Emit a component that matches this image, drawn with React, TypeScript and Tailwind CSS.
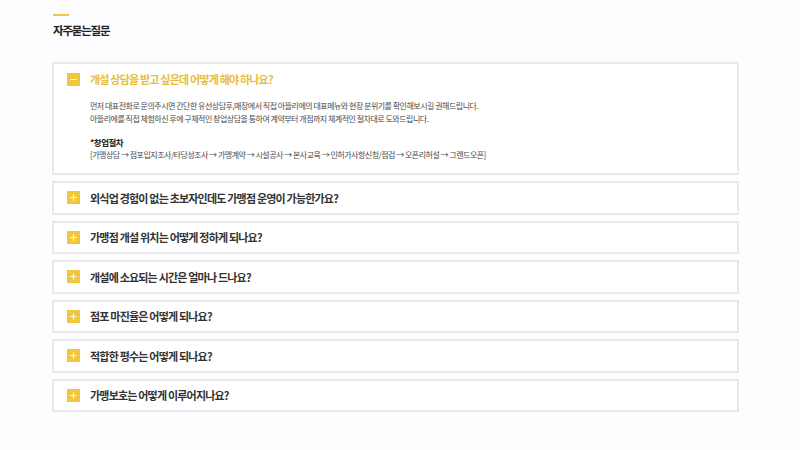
import { Minus, Plus } from "lucide-react";

const FAQS = [
  "외식업 경험이 없는 초보자인데도 가맹점 운영이 가능한가요?",
  "가맹점 개설 위치는 어떻게 정하게 되나요?",
  "개설에 소요되는 시간은 얼마나 드나요?",
  "점포 마진율은 어떻게 되나요?",
  "적합한 평수는 어떻게 되나요?",
  "가맹보호는 어떻게 이루어지나요?",
];

const font = { fontFamily: '"Noto Sans CJK KR", "Noto Sans", sans-serif' };

export default function App() {
  return (
    <div className="min-h-[450px] w-[800px] bg-[#fdfcfe] pl-[52px] pt-[14px]" style={font}>
      {/* Title */}
      <div className="pl-px">
        <div className="h-[2px] w-[16px] bg-[#f0c63f]" />
        <h2 className="mt-[6px] text-[11.5px] font-bold leading-[16px] tracking-[-1.2px] text-[#222]">
          자주묻는질문
        </h2>
      </div>

      <div className="mt-[24px] w-[687px]">
        {/* Open item */}
        <div className="mb-[6px] h-[113px] border-2 border-[#e9e8ea] bg-white">
          <div className="flex h-[31px] items-center pl-[13px]">
            <span className="flex h-[13px] w-[13px] items-center justify-center bg-[#f0c63f]">
              <Minus size={9} strokeWidth={3} color="#fff" />
            </span>
            <span className="ml-[10px] text-[11px] font-bold tracking-[-0.8px] text-[#e8bd3c]">
              개설 상담을 받고 싶은데 어떻게 해야 하나요?
            </span>
          </div>
          <div className="pl-[36px] pt-[5px] text-[8px] leading-[12.5px] tracking-[-0.5px] text-[#4a4a4a]">
            <p>
              먼저 대표전화로 문의주시면 간단한 유선상담후,매장에서 직접 아뜰리에의 대표메뉴와 현장 분위기를 확인해보시길 권해드립니다.
            </p>
            <p>
              아뜰리에를 직접 체험하신 후에 구체적인 창업상담을 통하여 계약부터 개점까지 체계적인 절차대로 도와드립니다.
            </p>
            <p className="mt-[11px] text-[8.5px] font-bold text-[#222]">*창업절차</p>
            <p>
              [가맹상담 → 점포입지조사/타당성조사 → 가맹계약 → 시설공사 → 본사교육 → 인허가사항신청/점검 → 오픈리허설 → 그랜드오픈]
            </p>
          </div>
        </div>

        {FAQS.map((q) => (
          <div
            key={q}
            className="mb-[6px] flex h-[33.5px] items-center border-2 border-[#e9e8ea] bg-white pl-[13px]"
          >
            <span className="flex h-[13px] w-[13px] items-center justify-center bg-[#f0c63f]">
              <Plus size={9} strokeWidth={3} color="#fff" />
            </span>
            <span className="ml-[10px] text-[11px] font-bold tracking-[-0.8px] text-[#333]">{q}</span>
          </div>
        ))}
      </div>
    </div>
  );
}
